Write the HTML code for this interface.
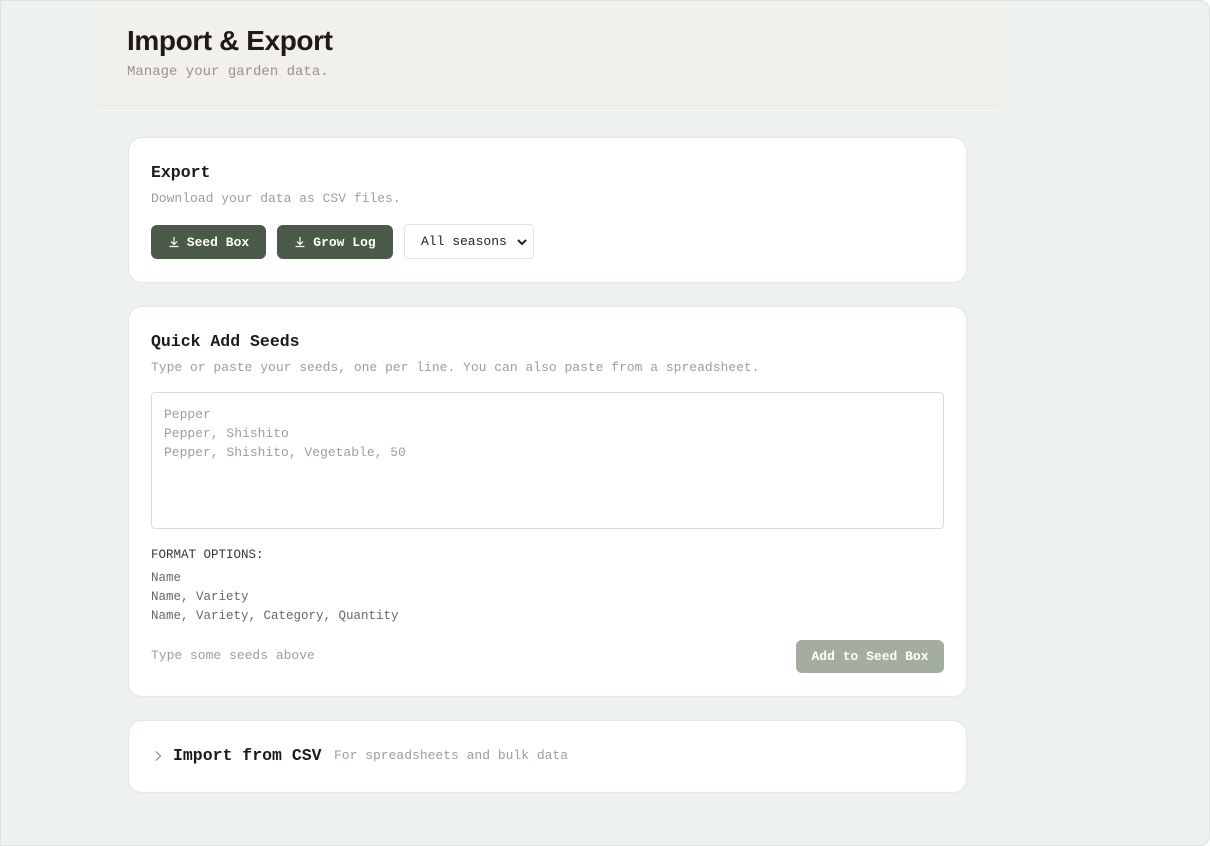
<!DOCTYPE html>
<html><head><style>
*{box-sizing:border-box;margin:0;padding:0}
body{width:1210px;height:846px;background:#fff;font-family:"Liberation Mono",monospace;overflow:hidden}
.page{position:absolute;left:0;top:0;width:1210px;height:846px;background:#eef2ee;box-shadow:inset 0 0 0 1px #dfe3df;border-radius:0 10px 10px 0}
.hdr{position:absolute;left:98px;top:1px;width:899px;height:105px;background:#f1f0eb;border-bottom:1px solid #e6e6e0}
.hdr h1{position:absolute;left:29px;top:24px;font:600 28px "Liberation Sans",sans-serif;color:#1f1a17;letter-spacing:-0.4px}
.hdr p{position:absolute;left:29px;top:63px;font-size:14px;color:#9c9189}
.card{position:absolute;left:128px;width:839px;background:#fff;border:1px solid #e3e6e1;border-radius:14px}
h2{position:absolute;left:22px;font-size:16.5px;font-weight:bold;color:#1f1a17}
.sub{position:absolute;left:22px;font-size:13px;color:#a39c96}
.btn{position:absolute;top:87px;height:34px;background:#4a5a48;color:#fff;border-radius:6px;font-size:13px;font-weight:bold;display:flex;align-items:center;justify-content:center;gap:7px}
.sel{position:absolute;left:275px;top:86px;width:130px;height:35px;border:1px solid #e2e2de;border-radius:4px;font-size:13px;color:#222;padding-left:16px;display:flex;align-items:center}
.ta{position:absolute;left:22px;top:85px;width:793px;height:137px;border:1px solid #dcdcd7;border-radius:4px;padding:12px;font-size:13px;line-height:19px;color:#a39c96}
.fo{position:absolute;left:22px;font-size:12.5px;line-height:19px;color:#6d6560}
</style></head><body>
<div class="page">
<div class="hdr"><h1>Import &amp; Export</h1><p>Manage your garden data.</p></div>

<div class="card" style="top:137px;height:146px">
<h2 style="top:25px">Export</h2>
<div class="sub" style="top:53px">Download your data as CSV files.</div>
<div class="btn" style="left:22px;width:115px;top:87px;height:34px"><svg width="12" height="12" viewBox="0 0 12 12" fill="none" stroke="#fff" stroke-width="1.2"><path d="M6 1v7M3 5.5l3 3 3-3M1.5 10.5h9"/></svg>Seed Box</div>
<div class="btn" style="left:148px;width:116px"><svg width="12" height="12" viewBox="0 0 12 12" fill="none" stroke="#fff" stroke-width="1.2"><path d="M6 1v7M3 5.5l3 3 3-3M1.5 10.5h9"/></svg>Grow Log</div>
<div class="sel">All seasons<svg style="position:absolute;right:6px;top:13px" width="10" height="8" viewBox="0 0 10 8" fill="none" stroke="#222" stroke-width="2"><path d="M1 2l4 4 4-4"/></svg></div>
</div>

<div class="card" style="top:306px;height:391px">
<h2 style="top:25px">Quick Add Seeds</h2>
<div class="sub" style="top:53px">Type or paste your seeds, one per line. You can also paste from a spreadsheet.</div>
<div class="ta">Pepper<br>Pepper, Shishito<br>Pepper, Shishito, Vegetable, 50</div>
<div class="fo" style="top:239px;color:#3b3530">FORMAT OPTIONS:</div>
<div class="fo" style="top:262px">Name<br>Name, Variety<br>Name, Variety, Category, Quantity</div>
<div class="sub" style="top:341px">Type some seeds above</div>
<div class="btn" style="left:667px;top:333px;width:148px;height:33px;background:#a3ada0">Add to Seed Box</div>
</div>

<div class="card" style="top:720px;height:73px">
<svg style="position:absolute;left:25px;top:29px" width="8" height="12" viewBox="0 0 8 12" fill="none" stroke="#999" stroke-width="1.3"><path d="M2 1.5l4.5 4.5-4.5 4.5"/></svg>
<h2 style="left:44px;top:25px">Import from CSV</h2>
<div class="sub" style="left:205px;top:27px">For spreadsheets and bulk data</div>
</div>
</div>
</body></html>
